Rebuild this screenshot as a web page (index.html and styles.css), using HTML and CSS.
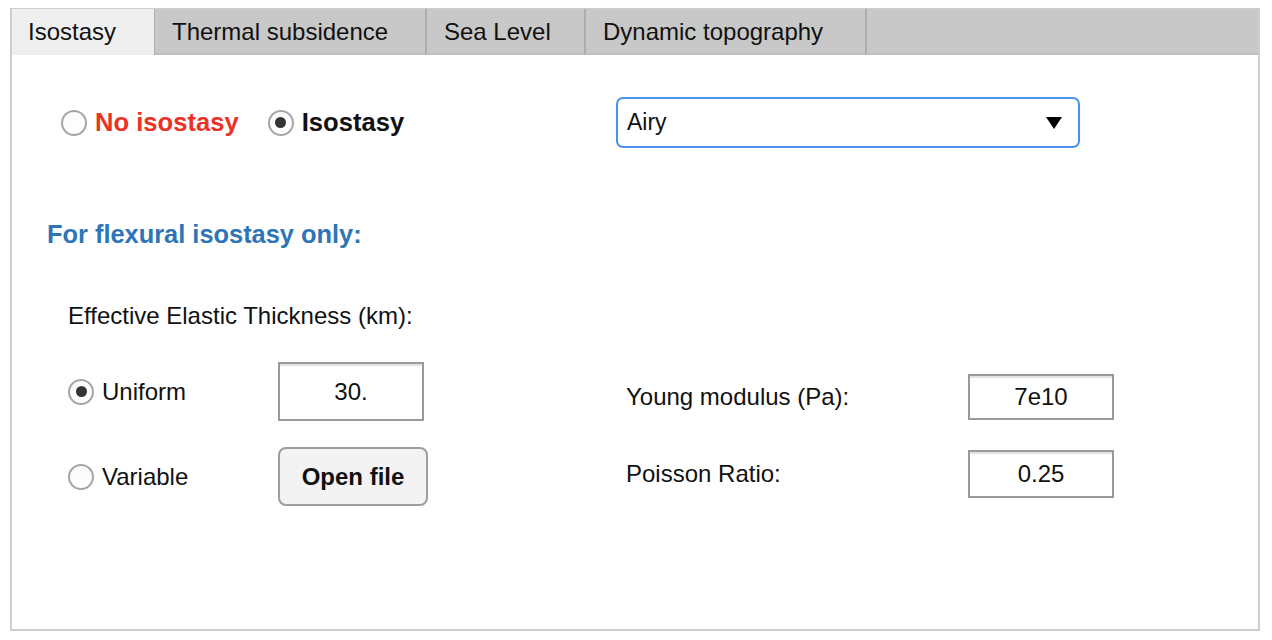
FILE: index.html
```html
<!DOCTYPE html>
<html lang="en">
<head>
<meta charset="utf-8">
<title>Isostasy</title>
<link rel="stylesheet" href="styles.css">
</head>
<body>
<div class="frame">
  <div class="tabs">
    <div class="tab active tab-iso">Isostasy</div>
    <div class="tab tab-thermal">Thermal subsidence</div>
    <div class="tab tab-sea">Sea Level</div>
    <div class="tab tab-dyn">Dynamic topography</div>
  </div>
  <div class="panel">
    <div class="row-top">
      <div class="iso-choice">
        <label class="radio"><span class="dot"></span><span class="lbl bold red">No isostasy</span></label>
        <label class="radio second"><span class="dot on"></span><span class="lbl bold">Isostasy</span></label>
      </div>
      <div class="select"><span>Airy</span><span class="caret"></span></div>
    </div>
    <h2 class="section">For flexural isostasy only:</h2>
    <div class="et-label">Effective Elastic Thickness (km):</div>
    <div class="params">
      <div class="et-grid">
        <label class="radio"><span class="dot on"></span><span class="lbl">Uniform</span></label>
        <div class="field tall">30.</div>
        <label class="radio"><span class="dot"></span><span class="lbl">Variable</span></label>
        <div class="button">Open file</div>
      </div>
      <div class="mech-grid">
        <div class="plabel">Young modulus (Pa):</div>
        <div class="field short">7e10</div>
        <div class="plabel">Poisson Ratio:</div>
        <div class="field short2">0.25</div>
      </div>
    </div>
  </div>
</div>
</body>
</html>
```
FILE: styles.css
```css
html, body {
  margin: 0;
  padding: 0;
  background: #ffffff;
}
body {
  font-family: "Liberation Sans", Arial, sans-serif;
  color: #111111;
}
.frame {
  box-sizing: border-box;
  margin: 8px 0 0 10px;
  width: 1250px;
  height: 623px;
  border: 2px solid #cdcdcd;
  border-top-width: 1px;
  background: #ffffff;
}
.tabs {
  display: flex;
  height: 46px;
  background: #c8c8c8;
  box-shadow: inset 0 -2px 0 #bfbfbf;
}
.tab {
  box-sizing: border-box;
  height: 46px;
  display: flex;
  align-items: center;
  padding: 0 0 0 17px;
  font-size: 24px;
  color: #111111;
  border-right: 2px solid #adadad;
  white-space: nowrap;
}
.tab.active {
  background: #efefef;
  padding-left: 16px;
  border-right: 1px solid #b0b0b0;
}
.tab-iso { width: 143px; }
.tab-thermal { width: 272px; }
.tab-sea { width: 159px; }
.tab-dyn { width: 281px; }
.panel {
  padding-top: 42px;
}
.row-top {
  display: flex;
  align-items: center;
  height: 51px;
  padding-left: 49px;
}
.iso-choice {
  display: flex;
  align-items: center;
  width: 555px;
}
.radio {
  display: flex;
  align-items: center;
}
.radio.second {
  margin-left: 29px;
}
.dot {
  box-sizing: border-box;
  width: 26px;
  height: 26px;
  border-radius: 50%;
  border: 2px solid #a6a6a6;
  background: linear-gradient(#fafafa, #ffffff);
  display: flex;
  align-items: center;
  justify-content: center;
  flex: none;
}
.dot.on::after {
  content: "";
  width: 11px;
  height: 11px;
  border-radius: 50%;
  background: #333333;
}
.lbl {
  margin-left: 8px;
  font-size: 24px;
}
.lbl.bold {
  font-size: 25.6px;
  font-weight: bold;
}
.red {
  color: #ec3225;
}
.select {
  box-sizing: border-box;
  width: 464px;
  height: 51px;
  border: 2px solid #4b93ea;
  border-radius: 7px;
  display: flex;
  align-items: center;
  justify-content: space-between;
  padding: 0 16px 0 9px;
  font-size: 23px;
}
.caret {
  width: 0;
  height: 0;
  border-left: 8px solid transparent;
  border-right: 8px solid transparent;
  border-top: 12px solid #000000;
}
.section {
  margin: 71px 0 0 35px;
  font-size: 25.4px;
  line-height: 30px;
  font-weight: bold;
  color: #2e75b8;
}
.et-label {
  margin: 53px 0 0 56px;
  font-size: 24px;
  line-height: 28px;
}
.params {
  display: flex;
  align-items: flex-start;
  margin-top: 32px;
  padding-left: 56px;
}
.et-grid {
  display: grid;
  grid-template-columns: 210px auto;
  grid-auto-rows: 59px;
  row-gap: 26px;
  align-items: center;
  width: 558px;
}
.field {
  box-sizing: border-box;
  width: 146px;
  border: 2px solid #9a9a9a;
  background: #ffffff;
  box-shadow: inset 0 2px 0 #e2e2e2;
  display: flex;
  align-items: center;
  justify-content: center;
  font-size: 24px;
}
.field.tall {
  height: 59px;
}
.field.short {
  height: 46px;
}
.field.short2 {
  height: 48px;
}
.button {
  box-sizing: border-box;
  width: 150px;
  height: 59px;
  border: 2px solid #9d9d9d;
  border-radius: 8px;
  background: #f3f3f3;
  display: flex;
  align-items: center;
  justify-content: center;
  font-size: 24px;
  font-weight: bold;
}
.mech-grid {
  display: grid;
  grid-template-columns: 342px 146px;
  row-gap: 30px;
  align-items: center;
  margin-top: 12px;
}
.plabel {
  font-size: 24px;
}
```
